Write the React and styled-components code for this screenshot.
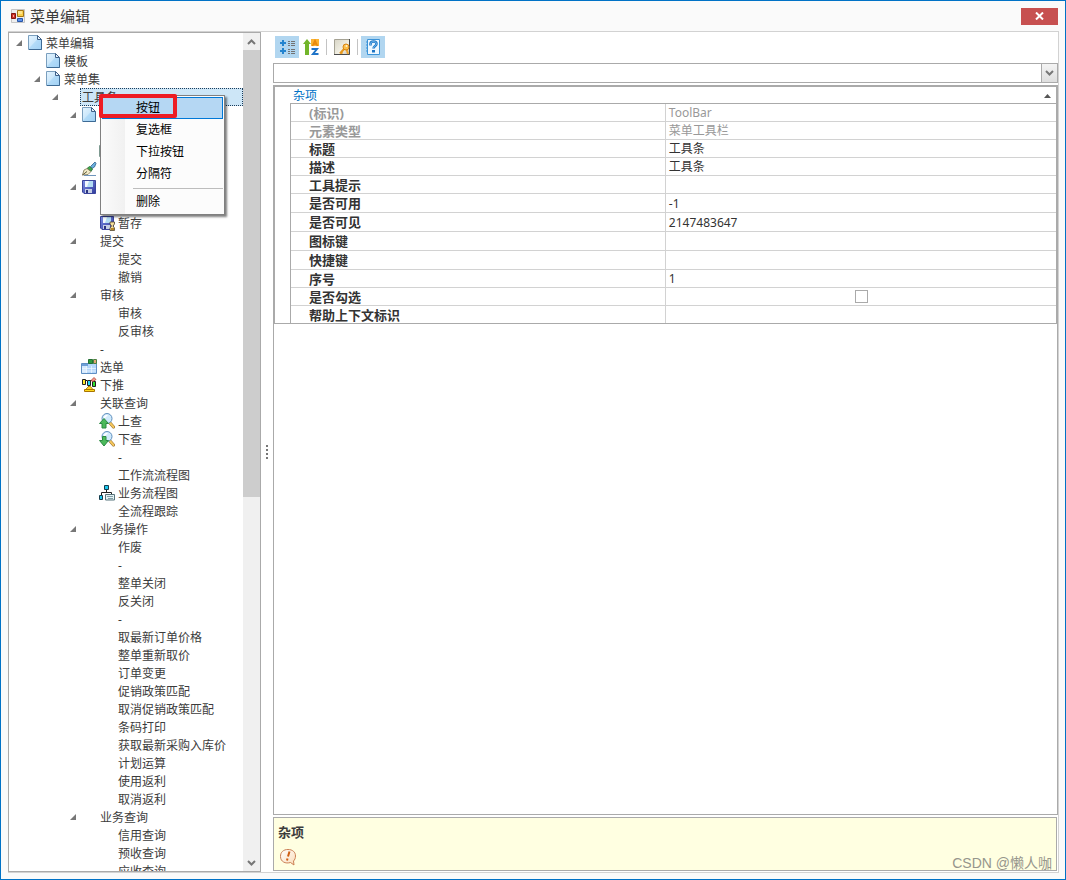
import React from "react";
import styled, { createGlobalStyle, css } from "styled-components";

const GlobalStyle = createGlobalStyle`
  *, *::before, *::after { box-sizing: border-box; }
  body {
    margin: 0;
    background: #fafafa;
    color: #3c3c3c;
    font-family: "Noto Sans", "Noto Sans CJK SC", sans-serif;
    font-size: 12px;
  }
  button, select, input { font: inherit; color: inherit; margin: 0; padding: 0; }
`;

const Window = styled.div`
  position: relative;
  display: flex;
  flex-direction: column;
  height: 100vh;
  padding: 0 6px 6px 7px;
  border: 1px solid #0072c6;
  background: #fafafa;
`;

const TitleBar = styled.header`
  display: flex;
  align-items: center;
  height: 30px;
  flex: none;
  padding-left: 3px;
`;

const Title = styled.h1`
  flex: 1;
  margin: 0 0 0 3px;
  font-size: 15px;
  font-weight: 400;
  line-height: 20px;
`;

const CloseButton = styled.button`
  display: grid;
  place-items: center;
  width: 37px;
  height: 17px;
  margin-right: 1px;
  border: 0;
  background: #c75050;
`;

const Body = styled.main`
  flex: 1;
  min-height: 0;
  display: grid;
  grid-template-columns: 253px 12px minmax(0, 1fr);
  border: 1px solid #d2d2d2;
  border-left: 0;
  background: #fff;
`;

const TreePanel = styled.nav`
  display: flex;
  min-height: 0;
  border: 1px solid #aaa;
`;

const Tree = styled.ul`
  flex: 1;
  min-width: 0;
  margin: 0;
  padding: 1px 0 0;
  overflow: hidden;
  list-style: none;
`;

const TreeRow = styled.li`
  display: flex;
  align-items: center;
  height: 18px;
  padding-left: ${(p) => 7 + p.$level * 18}px;
`;

const Expander = styled.span`
  display: flex;
  flex: none;
  width: 11px;
`;

const IconSlot = styled.span`
  display: flex;
  flex: none;
  width: 16px;
  height: 16px;
  margin-right: 1px;
`;

const TreeLabel = styled.span`
  height: 18px;
  padding-left: 1px;
  border: 1px solid transparent;
  line-height: 18px;
  white-space: nowrap;
  ${(p) =>
    p.$selected &&
    css`
      flex: 1;
      border: 1px dotted #1c3d5c;
      background: #cde6f7;
    `}
`;

const ScrollBar = styled.div`
  display: flex;
  flex-direction: column;
  flex: none;
  width: 17px;
  background: #f0f0f0;
`;

const ScrollButton = styled.button`
  display: grid;
  place-items: center;
  height: 17px;
  flex: none;
  border: 0;
  background: #f0f0f0;
`;

const ScrollThumb = styled.div`
  flex: 5;
  background: #cdcdcd;
`;

const ScrollRest = styled.div`
  flex: 4;
`;

const Splitter = styled.div`
  display: flex;
  flex-direction: column;
  align-items: center;
  justify-content: center;
  gap: 2px;
`;

const Dot = styled.span`
  width: 2px;
  height: 2px;
  background: #777;
`;

const Editor = styled.section`
  display: flex;
  flex-direction: column;
  min-width: 0;
  min-height: 0;
`;

const Toolbar = styled.div`
  display: flex;
  align-items: center;
  height: 31px;
  flex: none;
  padding: 0 0 2px 2px;
`;

const ToolButton = styled.button`
  display: grid;
  place-items: center;
  width: 24px;
  height: 22px;
  border: 0;
  background: ${(p) => (p.$active ? "#b1d6f0" : "transparent")};
`;

const ToolSeparator = styled.span`
  width: 1px;
  height: 16px;
  margin: 0 3px;
  background: #c3c3c3;
`;

const Combo = styled.div`
  display: grid;
  flex: none;
  height: 20px;
  margin-bottom: 2px;
`;

const ComboSelect = styled.select`
  grid-area: 1 / 1;
  width: 100%;
  appearance: none;
  border: 1px solid #aaa;
  border-radius: 0;
  background: #fff;
`;

const ComboArrow = styled.span`
  grid-area: 1 / 1;
  justify-self: end;
  display: grid;
  place-items: center;
  width: 17px;
  border: 1px solid #aaa;
  background: linear-gradient(#f4f4f4, #dedede);
  pointer-events: none;
`;

const GridFrame = styled.div`
  flex: 1;
  min-height: 0;
  border: 1px solid #aaa;
`;

const Category = styled.section`
  border: 1px solid #aaa;
  border-bottom: 0;
`;

const CategoryHead = styled.h2`
  display: flex;
  align-items: center;
  justify-content: space-between;
  height: 16px;
  margin: 0;
  padding: 1px 5px 0 18px;
  font-size: 12px;
  font-weight: 400;
  line-height: 16px;
  color: #0072c6;
`;

const CategoryBody = styled.div`
  padding-left: 15px;
  border-bottom: 1px solid #aaa;
`;

const PropertyTable = styled.table`
  width: 100%;
  table-layout: fixed;
  border-spacing: 0;
  border-top: 1px solid #aaa;
  border-left: 1px solid #aaa;
`;

const PropertyRow = styled.tr`
  height: ${(p) => (p.$tall ? 19 : 18)}px;
  color: ${(p) => (p.$muted ? "#999" : "#333")};

  > * { border-bottom: 1px solid #d2d2d2; }
  &:last-child { height: 17px; }
  &:last-child > * { border-bottom: 0; }
`;

const PropertyName = styled.th`
  width: 49%;
  padding: 0 0 0 18px;
  border-right: 1px solid #d2d2d2;
  font-size: 13px;
  font-weight: 700;
  line-height: 16px;
  text-align: left;
`;

const PropertyValue = styled.td`
  padding: 1px 0 0 3px;
  line-height: 16px;
`;

const CheckCell = styled.td`
  padding: 0 0 0 2px;
  line-height: 0;
  text-align: center;
`;

const CheckBox = styled.input`
  appearance: none;
  width: 13px;
  height: 13px;
  border: 1px solid #aaa;
  background: #fff;
  vertical-align: middle;
`;

const Description = styled.footer`
  position: relative;
  flex: none;
  height: 54px;
  margin: 2px 1px 1px 0;
  padding: 5px 4px 0;
  border: 1px solid #aaa;
  background: #ffffe1;
`;

const DescriptionTitle = styled.h2`
  margin: 0 0 7px;
  font-size: 13px;
  font-weight: 700;
  line-height: 18px;
`;

const Watermark = styled.span`
  position: absolute;
  right: 4px;
  bottom: -3px;
  font-family: "Liberation Sans", "Noto Sans CJK SC", sans-serif;
  font-size: 14px;
  line-height: 20px;
  color: #96968c;
`;

const ContextMenu = styled.ul`
  position: absolute;
  left: 99px;
  top: 94px;
  width: 125px;
  margin: 0;
  padding: 1px;
  border: 1px solid #808080;
  background: linear-gradient(90deg, #fbfbfb 0, #f1f1f1 24px, #fcfcfc 24px);
  box-shadow: 2px 2px 2px rgba(0, 0, 0, 0.5);
  list-style: none;
  color: #000;
`;

const MenuItem = styled.button`
  display: block;
  width: 100%;
  height: 22px;
  padding-left: 33px;
  border: 1px solid ${(p) => (p.$active ? "#0078d7" : "transparent")};
  background: ${(p) => (p.$active ? "#b5d7f3" : "transparent")};
  line-height: 20px;
  text-align: left;
`;

const MenuSeparator = styled.li`
  height: 1px;
  margin: 3px 0 2px 31px;
  background: #bdbdbd;
`;

const RedOutline = styled.div`
  position: absolute;
  left: 98px;
  top: 93px;
  width: 78px;
  height: 24px;
  border: 4px solid #ed1c24;
  border-radius: 2px;
  pointer-events: none;
`;

/* ---------- icons ---------- */

const Svg = ({ size = 16, children, ...rest }) => (
  <svg width={size} height={size} viewBox={`0 0 ${size} ${size}`} aria-hidden="true" {...rest}>
    {children}
  </svg>
);

const PageIcon = () => (
  <Svg>
    <defs>
      <linearGradient id="pg" x1="0" y1="0" x2="1" y2="1">
        <stop offset="0" stopColor="#e4f4ff" />
        <stop offset="0.45" stopColor="#cde8fb" />
        <stop offset="0.5" stopColor="#b2dbf8" />
        <stop offset="1" stopColor="#a0d0f4" />
      </linearGradient>
    </defs>
    <path d="M1.500.5h9l4 4v10h-13z" fill="url(#pg)" stroke="#7a9fbe" />
    <path d="M10.500.5v4h4z" fill="#e9f4fc" stroke="#3e6089" />
    <path d="M14.500 5v9.500H2" fill="none" stroke="#3d6a94" />
  </Svg>
);

const SaveShape = () => (
  <>
    <defs>
      <linearGradient id="sv" x1="0" y1="0" x2="1" y2="1">
        <stop offset="0" stopColor="#7c8ee6" />
        <stop offset="1" stopColor="#303b9c" />
      </linearGradient>
    </defs>
    <path d="M1.500 1.500h13v13H3l-1.500-1.500z" fill="url(#sv)" stroke="#3b459d" />
    <path d="M4 2h8v6H4z" fill="#f2f8fd" />
    <path d="M8 2h4v6H6z" fill="#b3dcf4" />
    <path d="M4 10h7v4H4z" fill="#c6cfe6" />
    <path d="M5 11h2v3H5z" fill="#2a3380" />
  </>
);

const SaveIcon = () => (
  <Svg>
    <SaveShape />
  </Svg>
);

const SaveTempIcon = () => (
  <Svg>
    <SaveShape />
    <path d="M11 7h4.500v2l-1.500 2 1.500 2v2.500h-4.500v-2.500l1.500-2-1.500-2z" fill="#f6df9b" stroke="#4e432c" strokeWidth=".8" />
    <path d="M12 13h3v2h-3z" fill="#b68728" />
  </Svg>
);

const PenIcon = () => (
  <Svg>
    <path d="M14 1l1 1.500-1.500 3.500-2.500 1.500-1.500-2z" fill="#6bb0dd" stroke="#2e5f8d" strokeWidth=".8" />
    <path d="M8.500 5.500 11.500 8 10 10.500 6 7.500z" fill="#3fa74d" stroke="#1c6a2b" strokeWidth=".8" />
    <path d="M6 7.500l4 3-3 3-5.500.5L3 9z" fill="#f2ebc8" stroke="#7c744f" strokeWidth=".8" />
    <path d="M1.500 14 6 10.500" stroke="#5b563c" />
    <path d="M3 14.500h12" stroke="#6f95bb" />
  </Svg>
);

const SheetIcon = () => (
  <Svg>
    <path d="M.5 4.500h15v10H.5z" fill="#b4d6fa" stroke="#5f8fc4" />
    <path d="M1 5h6v2H1z" fill="#6f9fd8" />
    <path d="M1 7h5v7H1z" fill="#d5e9fd" />
    <path d="M1 9.500h14M1 12h14M5.500 7v7M10.500 7v7" stroke="#f0f8ff" strokeWidth=".7" />
    <path d="M7.500.5h4v4h-4z" fill="#2c9a3d" stroke="#236f33" />
    <path d="M12.500.5h3v4h-3z" fill="#dfa377" stroke="#4f8140" />
  </Svg>
);

const PushIcon = () => (
  <Svg>
    <path d="M4 3.500h2M9 3.500h2M7.500 8v3" stroke="#111" fill="none" />
    <path d="M1.500 2.500h3v5h-3z" fill="#ffe92b" stroke="#222" />
    <path d="M6.500 3.500h3v5h-3z" fill="#24d9f5" stroke="#222" />
    <path d="M11.500 4.500h3v5h-3z" fill="#32de31" stroke="#222" />
    <path d="M10 3.500 13 .5l2 2-3 2z" fill="#f49a88" stroke="#b0413a" strokeWidth=".8" />
    <path d="M4.500 12.500 7.500 9.500h2l2.500 3z" fill="#ffcf1c" stroke="#a87400" strokeWidth=".8" />
    <path d="M3.500 12.500h10v2h-10z" fill="#ffd91c" stroke="#a87400" />
  </Svg>
);

const SearchIcon = ({ down }) => (
  <Svg>
    <path d="m11 10 3.500 4" stroke="#8c6727" strokeWidth="3" strokeLinecap="round" />
    <path d="m11 10 3.500 4" stroke="#f5c65c" strokeWidth="2" strokeLinecap="round" />
    <circle cx="8" cy="5.500" r="5" fill="#d0eafc" stroke="#5f8fbd" />
    <path d="M5.500 5a3 3 0 0 1 3-2.500" stroke="#fff" strokeWidth="1.500" fill="none" />
    <path
      d={down ? "M3.500 5.500h3.500v4h2.500l-4.500 5.500-4.500-5.500h3z" : "M5 5.500 9.500 10.500H7v4.500H3v-4.500H.5z"}
      fill="#4cba5b"
      stroke="#2c8a43"
    />
  </Svg>
);

const FlowIcon = () => (
  <Svg>
    <path d="M7.500 5v3M2.500 10V7.500h10V9" fill="none" stroke="#222" />
    <path d="M5.500.5h4v4h-4z" fill="#1dc7ee" stroke="#163b4b" />
    <path d="M.5 10.500h3v4h-3z" fill="#1dc7ee" stroke="#163b4b" />
    <path d="M6.500 9.500h9v5.500h-9z" fill="#e7f3f5" stroke="#57747c" />
    <path d="M8 11.500h6M9 13.500h5" stroke="#83a0a8" />
  </Svg>
);

const SliverIcon = () => (
  <Svg>
    <path d="M.5 2.500h10v11H.5z" fill="#c8e3d6" stroke="#7f9b92" />
  </Svg>
);

const ArrowIcon = () => (
  <Svg size={6}>
    <path d="M6 0v6H0z" fill="#777" />
  </Svg>
);

const AppIcon = () => (
  <Svg>
    <path d="M.5 1.500h13v13H.5z" fill="#eee" stroke="#c5c5c5" />
    <path d="M6.500 2.500h6v6h-6z" fill="#fbd04a" stroke="#a67614" />
    <path d="M7 3h4v3H7z" fill="#ffe48a" />
    <path d="M.5 5.500h4v5H.5z" fill="#cc3125" stroke="#83140f" />
    <path d="M2 7h1v2H2z" fill="#fba59a" />
    <path d="M6.500 10.500h5v3h-5z" fill="#5c91ec" stroke="#2857a8" />
  </Svg>
);

const CategorizedIcon = () => (
  <Svg>
    <path d="M4 1v6M1 4h6M4 9v6M1 12h6" stroke="#2484cf" strokeWidth="2" />
    <path d="M9 2.500h2M12 2.500h4M9 4.500h2M12 4.500h4M9 6.500h2M12 6.500h4M9 10.500h2M12 10.500h4M9 12.500h2M12 12.500h4M9 14.500h2M12 14.500h4" stroke="#737373" />
  </Svg>
);

const SortIcon = () => (
  <Svg>
    <path d="M4 0 8 5H6v11H2V5H0z" fill="#72b52a" />
    <path d="M8 0h8v7H8z" fill="#fbb333" />
    <path d="M9.500 7 12 1.500 14.500 7M10.500 5h3" fill="none" stroke="#e8890c" strokeWidth="1.500" />
    <path d="M8.500 10H14L10 15h5.500" fill="none" stroke="#1f74c8" strokeWidth="2" />
  </Svg>
);

const KeyPageIcon = () => (
  <Svg>
    <defs>
      <linearGradient id="kp" x1="0" y1="0" x2="1" y2="1">
        <stop offset="0" stopColor="#d8d5c6" />
        <stop offset="0.6" stopColor="#f3f1e6" />
        <stop offset="1" stopColor="#c4c0b3" />
      </linearGradient>
    </defs>
    <path d="M.5.5h15v15H.5z" fill="url(#kp)" stroke="#a5a294" />
    <path d="M15.500 0v15.500H0" fill="none" stroke="#4a4a4a" />
    <path d="m10 10-4 4.500M7 13.500l1.500 1" stroke="#e8981c" strokeWidth="2" />
    <path d="m12.500 10 1.500 5" stroke="#f0a52c" strokeWidth="2" />
    <circle cx="12" cy="8" r="3" fill="#fcc04a" stroke="#d98512" />
    <circle cx="12.500" cy="7" r="1" fill="#fff3d2" />
  </Svg>
);

const HelpIcon = () => (
  <Svg>
    <path d="M2.500.5h12v15h-12z" fill="#eef8ff" stroke="#3b93d8" />
    <path d="M1 3h2M1 6h2M1 9h2M1 12h2" stroke="#3b93d8" />
    <path d="M5.500 6.500V5a3 2.500 0 0 1 6 0c0 2-3 2-3 4.500" fill="none" stroke="#1c74c4" strokeWidth="2.500" />
    <path d="M5.500 6V5a3 2.500 0 0 1 6 0c0 2-3 2-3 4" fill="none" stroke="#7cc4f5" strokeWidth=".8" />
    <path d="M7 11h3v2.500H7z" fill="#1c74c4" />
  </Svg>
);

const BubbleIcon = () => (
  <Svg size={18}>
    <defs>
      <linearGradient id="bb" x1="0" y1="0" x2="1" y2="1">
        <stop offset="0" stopColor="#fff" />
        <stop offset="1" stopColor="#fbdcb8" />
      </linearGradient>
    </defs>
    <path
      d="M10 1.500c4.500 0 7.500 2.500 7.500 6.500 0 2-.7 3.800-2 5l.5 4-3.500-2.500c-5 1.500-10-.7-10-6C2.500 4 5.500 1.500 10 1.500z"
      fill="url(#bb)"
      stroke="#cb7f54"
    />
    <path d="M11.500 3.500 10 8.500M9.500 10.500 9 12.500" stroke="#cf5f14" strokeWidth="2" />
  </Svg>
);

const Chevron = ({ up }) => (
  <svg width="9" height="6" viewBox="0 0 9 6" aria-hidden="true">
    <path d={up ? "M1 5 4.500 1.500 8 5" : "M1 1 4.500 4.500 8 1"} fill="none" stroke="#777" strokeWidth="2" />
  </svg>
);

const icons = {
  page: <PageIcon />,
  pen: <PenIcon />,
  save: <SaveIcon />,
  saveTemp: <SaveTempIcon />,
  sheet: <SheetIcon />,
  push: <PushIcon />,
  up: <SearchIcon />,
  down: <SearchIcon down />,
  flow: <FlowIcon />,
  sliver: <SliverIcon />,
};

/* level, label, icon, expanded */
const nodes = [
  [0, "菜单编辑", "page", true],
  [1, "模板", "page"],
  [1, "菜单集", "page", true],
  [2, "工具条", null, true],
  [3, "", "page", true],
  [4, ""],
  [4, "", "sliver"],
  [3, "", "pen"],
  [3, "", "save", true],
  [4, ""],
  [4, "暂存", "saveTemp"],
  [3, "提交", null, true],
  [4, "提交"],
  [4, "撤销"],
  [3, "审核", null, true],
  [4, "审核"],
  [4, "反审核"],
  [3, "-"],
  [3, "选单", "sheet"],
  [3, "下推", "push"],
  [3, "关联查询", null, true],
  [4, "上查", "up"],
  [4, "下查", "down"],
  [4, "-"],
  [4, "工作流流程图"],
  [4, "业务流程图", "flow"],
  [4, "全流程跟踪"],
  [3, "业务操作", null, true],
  [4, "作废"],
  [4, "-"],
  [4, "整单关闭"],
  [4, "反关闭"],
  [4, "-"],
  [4, "取最新订单价格"],
  [4, "整单重新取价"],
  [4, "订单变更"],
  [4, "促销政策匹配"],
  [4, "取消促销政策匹配"],
  [4, "条码打印"],
  [4, "获取最新采购入库价"],
  [4, "计划运算"],
  [4, "使用返利"],
  [4, "取消返利"],
  [3, "业务查询", null, true],
  [4, "信用查询"],
  [4, "预收查询"],
  [4, "应收查询"],
];

const properties = [
  { name: "(标识)", value: "ToolBar", muted: true },
  { name: "元素类型", value: "菜单工具栏", muted: true },
  { name: "标题", value: "工具条" },
  { name: "描述", value: "工具条" },
  { name: "工具提示", value: "" },
  { name: "是否可用", value: "-1", tall: true },
  { name: "是否可见", value: "2147483647", tall: true },
  { name: "图标键", value: "", tall: true },
  { name: "快捷键", value: "", tall: true },
  { name: "序号", value: "1" },
  { name: "是否勾选", check: true },
  { name: "帮助上下文标识", value: "" },
];

export default function App() {
  return (
    <>
      <GlobalStyle />
      <Window>
        <TitleBar>
          <AppIcon />
          <Title>菜单编辑</Title>
          <CloseButton aria-label="关闭">
            <svg width="9" height="8" viewBox="0 0 9 8" aria-hidden="true">
              <path d="M1 .5 8 7.500M8 .5 1 7.500" stroke="#fff" strokeWidth="2" />
            </svg>
          </CloseButton>
        </TitleBar>
        <Body>
          <TreePanel aria-label="菜单编辑">
            <Tree role="tree">
              {nodes.map(([level, label, icon, expanded], i) => (
                <TreeRow key={i} role="treeitem" aria-level={level + 1} $level={level}>
                  <Expander>{expanded && <ArrowIcon />}</Expander>
                  <IconSlot>{icon && icons[icon]}</IconSlot>
                  <TreeLabel $selected={i === 3}>{label}</TreeLabel>
                </TreeRow>
              ))}
            </Tree>
            <ScrollBar>
              <ScrollButton aria-label="向上滚动">
                <Chevron up />
              </ScrollButton>
              <ScrollThumb />
              <ScrollRest />
              <ScrollButton aria-label="向下滚动">
                <Chevron />
              </ScrollButton>
            </ScrollBar>
          </TreePanel>
          <Splitter>
            <Dot />
            <Dot />
            <Dot />
            <Dot />
          </Splitter>
          <Editor>
            <Toolbar>
              <ToolButton $active aria-label="分类">
                <CategorizedIcon />
              </ToolButton>
              <ToolButton aria-label="排序">
                <SortIcon />
              </ToolButton>
              <ToolSeparator />
              <ToolButton aria-label="属性页">
                <KeyPageIcon />
              </ToolButton>
              <ToolSeparator />
              <ToolButton $active aria-label="帮助">
                <HelpIcon />
              </ToolButton>
            </Toolbar>
            <Combo>
              <ComboSelect aria-label="对象">
                <option />
              </ComboSelect>
              <ComboArrow>
                <Chevron />
              </ComboArrow>
            </Combo>
            <GridFrame>
              <Category>
                <CategoryHead>
                  杂项
                  <svg width="7" height="4" viewBox="0 0 7 4" aria-hidden="true">
                    <path d="M0 4 3.500 0 7 4z" fill="#555" />
                  </svg>
                </CategoryHead>
                <CategoryBody>
                  <PropertyTable>
                    <tbody>
                      {properties.map((p, i) => (
                        <PropertyRow key={p.name} $muted={p.muted} $tall={p.tall}>
                          <PropertyName scope="row" id={`prop-${i}`}>
                            {p.name}
                          </PropertyName>
                          {p.check ? (
                            <CheckCell>
                              <CheckBox type="checkbox" aria-labelledby={`prop-${i}`} />
                            </CheckCell>
                          ) : (
                            <PropertyValue>{p.value}</PropertyValue>
                          )}
                        </PropertyRow>
                      ))}
                    </tbody>
                  </PropertyTable>
                </CategoryBody>
              </Category>
            </GridFrame>
            <Description>
              <DescriptionTitle>杂项</DescriptionTitle>
              <BubbleIcon />
              <Watermark>CSDN @懒人咖</Watermark>
            </Description>
          </Editor>
        </Body>
        <ContextMenu>
          <li><MenuItem $active>按钮</MenuItem></li>
          <li><MenuItem>复选框</MenuItem></li>
          <li><MenuItem>下拉按钮</MenuItem></li>
          <li><MenuItem>分隔符</MenuItem></li>
          <MenuSeparator role="separator" />
          <li><MenuItem>删除</MenuItem></li>
        </ContextMenu>
        <RedOutline />
      </Window>
    </>
  );
}
